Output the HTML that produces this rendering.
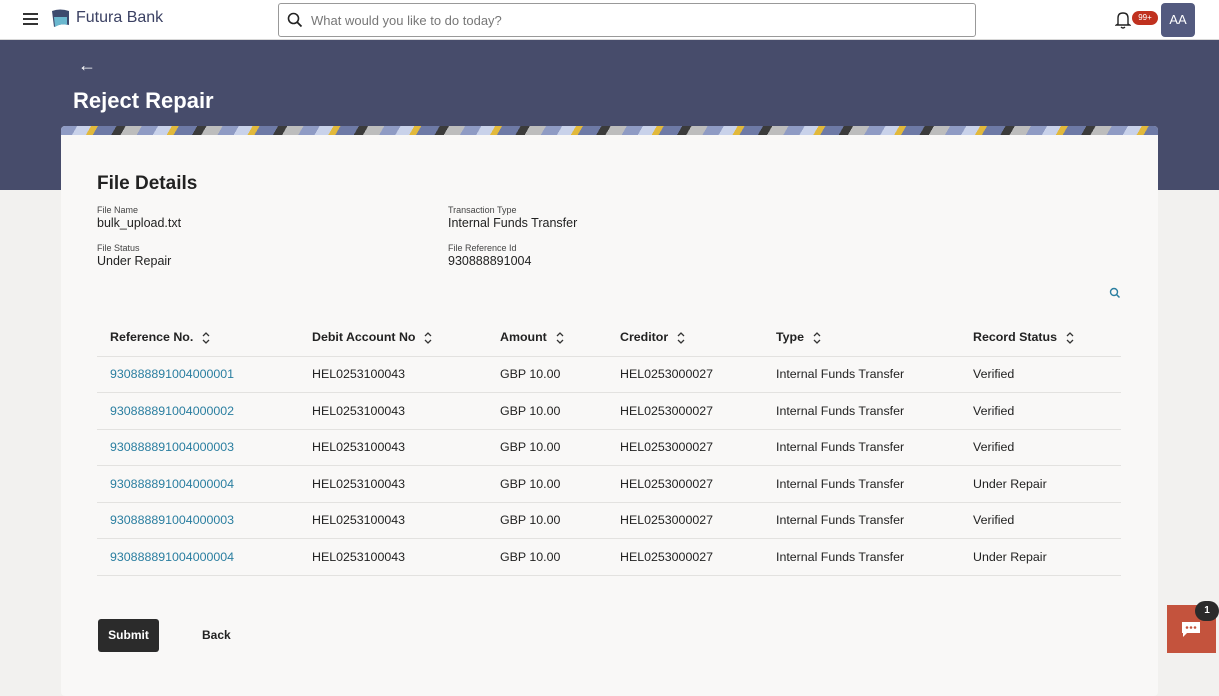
<!DOCTYPE html>
<html><head><meta charset="utf-8"><style>
*{box-sizing:border-box;margin:0;padding:0}
body{width:1219px;height:684px;overflow:hidden;background:#f2f1ef;font-family:"Liberation Sans",sans-serif;color:#222;position:relative}
.hdr{position:absolute;left:0;top:0;width:1219px;height:40px;background:#fff;border-bottom:1px solid #d8d8d8}
.ban{position:absolute;left:0;top:40px;width:1219px;height:150px;background:#474c6b}
.card{position:absolute;left:61px;top:126px;width:1097px;height:570px;background:#f9f8f7;border-radius:4px;overflow:hidden}
.strip{height:9px;background:repeating-linear-gradient(120deg,#8f9bc4 0 14px,#c9d2ea 14px 26px,#e2b93b 26px 32px,#6e7aa6 32px 48px,#3b3b3b 48px 56px,#bdbdbd 56px 70px)}
.abs{position:absolute}
.lbl{font-size:9px;color:#444}
.val{font-size:12.5px;color:#222}
table{position:absolute;left:97px;top:319px;width:1024px;border-collapse:collapse;font-size:12.4px}
th{text-align:left;font-weight:bold;height:37px;color:#222;padding-left:13px}
td{height:36.5px;border-top:1px solid #e3e2e0;padding-left:13px;color:#222}
td.l{color:#2a7ea0}
.ch{display:inline-block;margin-left:8px;vertical-align:middle}
</style></head><body>
<svg width="0" height="0" style="position:absolute"><defs><symbol id="s" viewBox="0 0 10 14"><path d="M2 5 L5 2 L8 5 M2 9 L5 12 L8 9" fill="none" stroke="#333" stroke-width="1.3"/></symbol></defs></svg>
<div class="hdr">
<div class="abs" style="left:23px;top:13px;width:15px;height:2px;background:#333;box-shadow:0 5px 0 #333,0 10px 0 #333"></div>
<svg class="abs" style="left:50px;top:8px" width="21" height="21"><path d="M2 3 Q10 0 19 3 L19 17 Q11 15 4 19 Z" fill="#3d4a6e"/><path d="M4 9 L17 9 L17 17 Q11 15 5 19 Z" fill="#6bb8cf"/></svg>
<div class="abs" style="left:76px;top:9px;font-size:16px;color:#3b4163">Futura Bank</div>
<div class="abs" style="left:278px;top:3px;width:698px;height:34px;border:1px solid #999;border-radius:3px">
<svg class="abs" style="left:8px;top:8px" width="16" height="16"><circle cx="6.5" cy="6.5" r="5" fill="none" stroke="#222" stroke-width="1.6"/><path d="M10 10 L14.5 14.5" stroke="#222" stroke-width="1.8"/></svg>
<div class="abs" style="left:32px;top:9px;font-size:13px;color:#777">What would you like to do today?</div></div>
<svg class="abs" style="left:1115px;top:11px" width="16" height="18"><path d="M3 13 L3 7 Q3 2 8 2 Q13 2 13 7 L13 13 L14.5 14 L1.5 14 Z" fill="none" stroke="#222" stroke-width="1.4"/><path d="M6 16 Q8 18 10 16" stroke="#222" fill="none" stroke-width="1.3"/></svg>
<div class="abs" style="left:1132px;top:11px;width:26px;height:14px;border-radius:7px;background:#c0311f;color:#fff;font-size:8px;text-align:center;line-height:14px">99+</div>
<div class="abs" style="left:1161px;top:3px;width:34px;height:34px;border-radius:4px;background:#535a7f;color:#fff;font-size:13px;text-align:center;line-height:34px">AA</div>
</div>
<div class="ban"></div>
<div class="abs" style="left:78px;top:55px;color:#fff;font-size:18px">&#8592;</div>
<div class="abs" style="left:73px;top:88px;color:#fff;font-size:22px;font-weight:bold">Reject Repair</div>
<div class="card"><div class="strip"></div></div>
<div class="abs" style="left:97px;top:173px;font-size:19px;font-weight:bold">File Details</div>
<div class="abs lbl" style="left:97px;top:205px">File Name</div>
<div class="abs val" style="left:97px;top:216px">bulk_upload.txt</div>
<div class="abs lbl" style="left:448px;top:205px">Transaction Type</div>
<div class="abs val" style="left:448px;top:216px">Internal Funds Transfer</div>
<div class="abs lbl" style="left:97px;top:243px">File Status</div>
<div class="abs val" style="left:97px;top:254px">Under Repair</div>
<div class="abs lbl" style="left:448px;top:243px">File Reference Id</div>
<div class="abs val" style="left:448px;top:254px">930888891004</div>
<svg class="abs" style="left:1109px;top:287px" width="12" height="12"><circle cx="5" cy="5" r="3.5" fill="none" stroke="#2a7ea0" stroke-width="1.4"/><path d="M7.5 7.5 L10.5 10.5" stroke="#2a7ea0" stroke-width="1.5"/></svg>
<table>
<tr><th style="width:202px">Reference No.<svg class="ch" width="10" height="14"><use href="#s"/></svg></th><th style="width:188px">Debit Account No<svg class="ch" width="10" height="14"><use href="#s"/></svg></th><th style="width:120px">Amount<svg class="ch" width="10" height="14"><use href="#s"/></svg></th><th style="width:156px">Creditor<svg class="ch" width="10" height="14"><use href="#s"/></svg></th><th style="width:197px">Type<svg class="ch" width="10" height="14"><use href="#s"/></svg></th><th>Record Status<svg class="ch" width="10" height="14"><use href="#s"/></svg></th></tr>
<tr><td class="l">930888891004000001</td><td>HEL0253100043</td><td>GBP 10.00</td><td>HEL0253000027</td><td>Internal Funds Transfer</td><td>Verified</td></tr>
<tr><td class="l">930888891004000002</td><td>HEL0253100043</td><td>GBP 10.00</td><td>HEL0253000027</td><td>Internal Funds Transfer</td><td>Verified</td></tr>
<tr><td class="l">930888891004000003</td><td>HEL0253100043</td><td>GBP 10.00</td><td>HEL0253000027</td><td>Internal Funds Transfer</td><td>Verified</td></tr>
<tr><td class="l">930888891004000004</td><td>HEL0253100043</td><td>GBP 10.00</td><td>HEL0253000027</td><td>Internal Funds Transfer</td><td>Under Repair</td></tr>
<tr><td class="l">930888891004000003</td><td>HEL0253100043</td><td>GBP 10.00</td><td>HEL0253000027</td><td>Internal Funds Transfer</td><td>Verified</td></tr>
<tr><td class="l" style="border-bottom:1px solid #e3e2e0">930888891004000004</td><td style="border-bottom:1px solid #e3e2e0">HEL0253100043</td><td style="border-bottom:1px solid #e3e2e0">GBP 10.00</td><td style="border-bottom:1px solid #e3e2e0">HEL0253000027</td><td style="border-bottom:1px solid #e3e2e0">Internal Funds Transfer</td><td style="border-bottom:1px solid #e3e2e0">Under Repair</td></tr>
</table>
<div class="abs" style="left:98px;top:619px;width:61px;height:33px;background:#2b2b2b;border-radius:3px;color:#fff;font-size:12px;font-weight:bold;text-align:center;line-height:33px">Submit</div>
<div class="abs" style="left:202px;top:628px;font-size:12px;font-weight:bold">Back</div>
<div class="abs" style="left:1167px;top:605px;width:49px;height:48px;background:#c4533d"></div>
<svg class="abs" style="left:1181px;top:621px" width="20" height="17"><path d="M1 1 H19 V12 H6 L2 16 V12 H1 Z" fill="#fff"/><circle cx="6" cy="6.5" r="1.3" fill="#c4533d"/><circle cx="10" cy="6.5" r="1.3" fill="#c4533d"/><circle cx="14" cy="6.5" r="1.3" fill="#c4533d"/></svg>
<div class="abs" style="left:1195px;top:601px;width:24px;height:20px;border-radius:10px;background:#2b2b2b;color:#fff;font-size:10px;font-weight:bold;text-align:center;line-height:20px">1</div>
</body></html>
